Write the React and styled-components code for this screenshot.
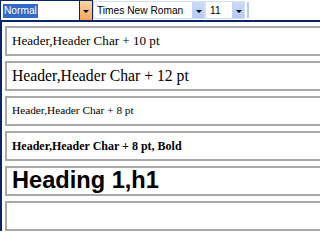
import styled, { createGlobalStyle } from "styled-components";

const GlobalStyle = createGlobalStyle`
  html, body {
    margin: 0;
    padding: 0;
    background: #ffffff;
    overflow: hidden;
  }
`;

const styles = [
  { label: "Header,Header Char + 10 pt", font: "serif", size: 13.1 },
  { label: "Header,Header Char + 12 pt", font: "serif", size: 15.7 },
  { label: "Header,Header Char + 8 pt", font: "serif", size: 11.3 },
  { label: "Header,Header Char + 8 pt, Bold", font: "serif", size: 12, bold: true },
  { label: "Heading 1,h1", font: "sans", size: 23.6, bold: true },
  { label: "", font: "sans", size: 18, bold: true },
];

const StyleDropdown = () => {
  return (
    <Wrapper>
      <GlobalStyle />
      <Toolbar>
        <Combo $width={93} $active>
          <Field>
            <Selected>Normal</Selected>
          </Field>
          <DropButton $active>
            <Arrow />
          </DropButton>
        </Combo>
        <Combo $width={112}>
          <Field $pad={3}>Times New Roman</Field>
          <DropButton>
            <Arrow />
          </DropButton>
        </Combo>
        <Combo $width={40}>
          <Field $pad={4}>11</Field>
          <DropButton>
            <Arrow />
          </DropButton>
        </Combo>
        <Separator />
      </Toolbar>
      <List>
        {styles.map((item, index) => {
          return (
            <Item
              key={index}
              $font={item.font}
              $size={item.size}
              $bold={item.bold}
            >
              {item.label}
            </Item>
          );
        })}
      </List>
    </Wrapper>
  );
};

const Wrapper = styled.div`
  width: 100vw;
  height: 100vh;
  overflow: hidden;
  background: #ffffff;
`;

const Toolbar = styled.div`
  display: flex;
  align-items: flex-start;
  height: 20px;
  background: #ffffff;
`;

const Combo = styled.div`
  display: flex;
  flex-shrink: 0;
  box-sizing: border-box;
  width: ${(p) => p.$width}px;
  height: ${(p) => (p.$active ? "20px" : "18px")};
  margin-top: ${(p) => (p.$active ? "0" : "1px")};
  border: 1px solid ${(p) => (p.$active ? "#0a246a" : "#d4def2")};
  border-bottom: ${(p) => (p.$active ? "none" : "1px solid #d4def2")};
  background: #ffffff;
`;

const Field = styled.div`
  flex: 1;
  display: flex;
  align-items: center;
  padding-left: ${(p) => (p.$pad ? p.$pad : 2)}px;
  font-family: "Liberation Sans", Arial, sans-serif;
  font-size: 10.2px;
  color: #000000;
  white-space: nowrap;
  overflow: hidden;
`;

const Selected = styled.span`
  display: inline-flex;
  align-items: center;
  height: 14px;
  padding: 0 1px;
  background: #316ac5;
  color: #ffffff;
`;

const DropButton = styled.div`
  box-sizing: border-box;
  width: ${(p) => (p.$active ? "13px" : "12px")};
  display: flex;
  justify-content: center;
  align-items: center;
  border-left: 1px solid ${(p) => (p.$active ? "#0a246a" : "#c2d3f5")};
  background: ${(p) =>
    p.$active
      ? "linear-gradient(#fdd5a6, #f7a45c)"
      : "linear-gradient(#cddcfc, #b2c8f3)"};
`;

const Arrow = styled.span`
  width: 0;
  height: 0;
  margin-top: 2px;
  border-left: 3px solid transparent;
  border-right: 3px solid transparent;
  border-top: 3px solid #000000;
`;

const Separator = styled.div`
  flex-shrink: 0;
  width: 2px;
  height: 16px;
  margin: 2px 0 0 2px;
  background: #b9c8e6;
`;

const List = styled.div`
  display: flex;
  flex-direction: column;
  gap: 5px;
  margin-right: -40px;
  padding: 4px 0 0 3px;
  border-top: 2px solid #0a246a;
  border-left: 2px solid #0a246a;
`;

const Item = styled.div`
  display: flex;
  align-items: center;
  flex-shrink: 0;
  box-sizing: border-box;
  height: 30px;
  padding-left: 5px;
  border: 2px solid #a9a9a9;
  font-family: ${(p) =>
    p.$font == "sans"
      ? '"Liberation Sans", Arial, sans-serif'
      : '"Liberation Serif", "Times New Roman", serif'};
  font-size: ${(p) => p.$size}px;
  font-weight: ${(p) => (p.$bold ? 700 : 400)};
  line-height: 1;
  color: #000000;
  white-space: nowrap;
`;

export default StyleDropdown;
